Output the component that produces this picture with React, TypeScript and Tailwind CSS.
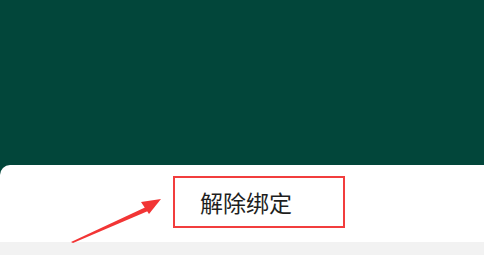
import React from "react";

// Annotated screenshot: green header, white sheet with a highlighted "unbind" button
const App = () => {
  return (
    <div className="relative w-[484px] h-[255px] overflow-hidden bg-[#02463a] font-['Noto_Sans_CJK_SC',sans-serif]">
      <div className="h-[165px]" />
      <div className="h-[77px] bg-white rounded-tl-[10px] pl-[173px] pt-[11px]">
        <div className="w-[172px] h-[52px] border-2 border-[#f23d3d] flex items-center pl-[25px]">
          <span className="text-[23px] leading-none text-[#1e1e1e]">解除绑定</span>
        </div>
      </div>
      <div className="h-[13px] bg-[#f2f2f2]" />

      {/* red annotation arrow */}
      <svg className="absolute left-0 top-0" width="484" height="255" viewBox="0 0 484 255">
        <polygon points="71,242 146,207 148,211 73,243" fill="#f23535" />
        <polygon points="161,199 141,202 149,214" fill="#f23535" />
      </svg>
    </div>
  );
};

export default App;
